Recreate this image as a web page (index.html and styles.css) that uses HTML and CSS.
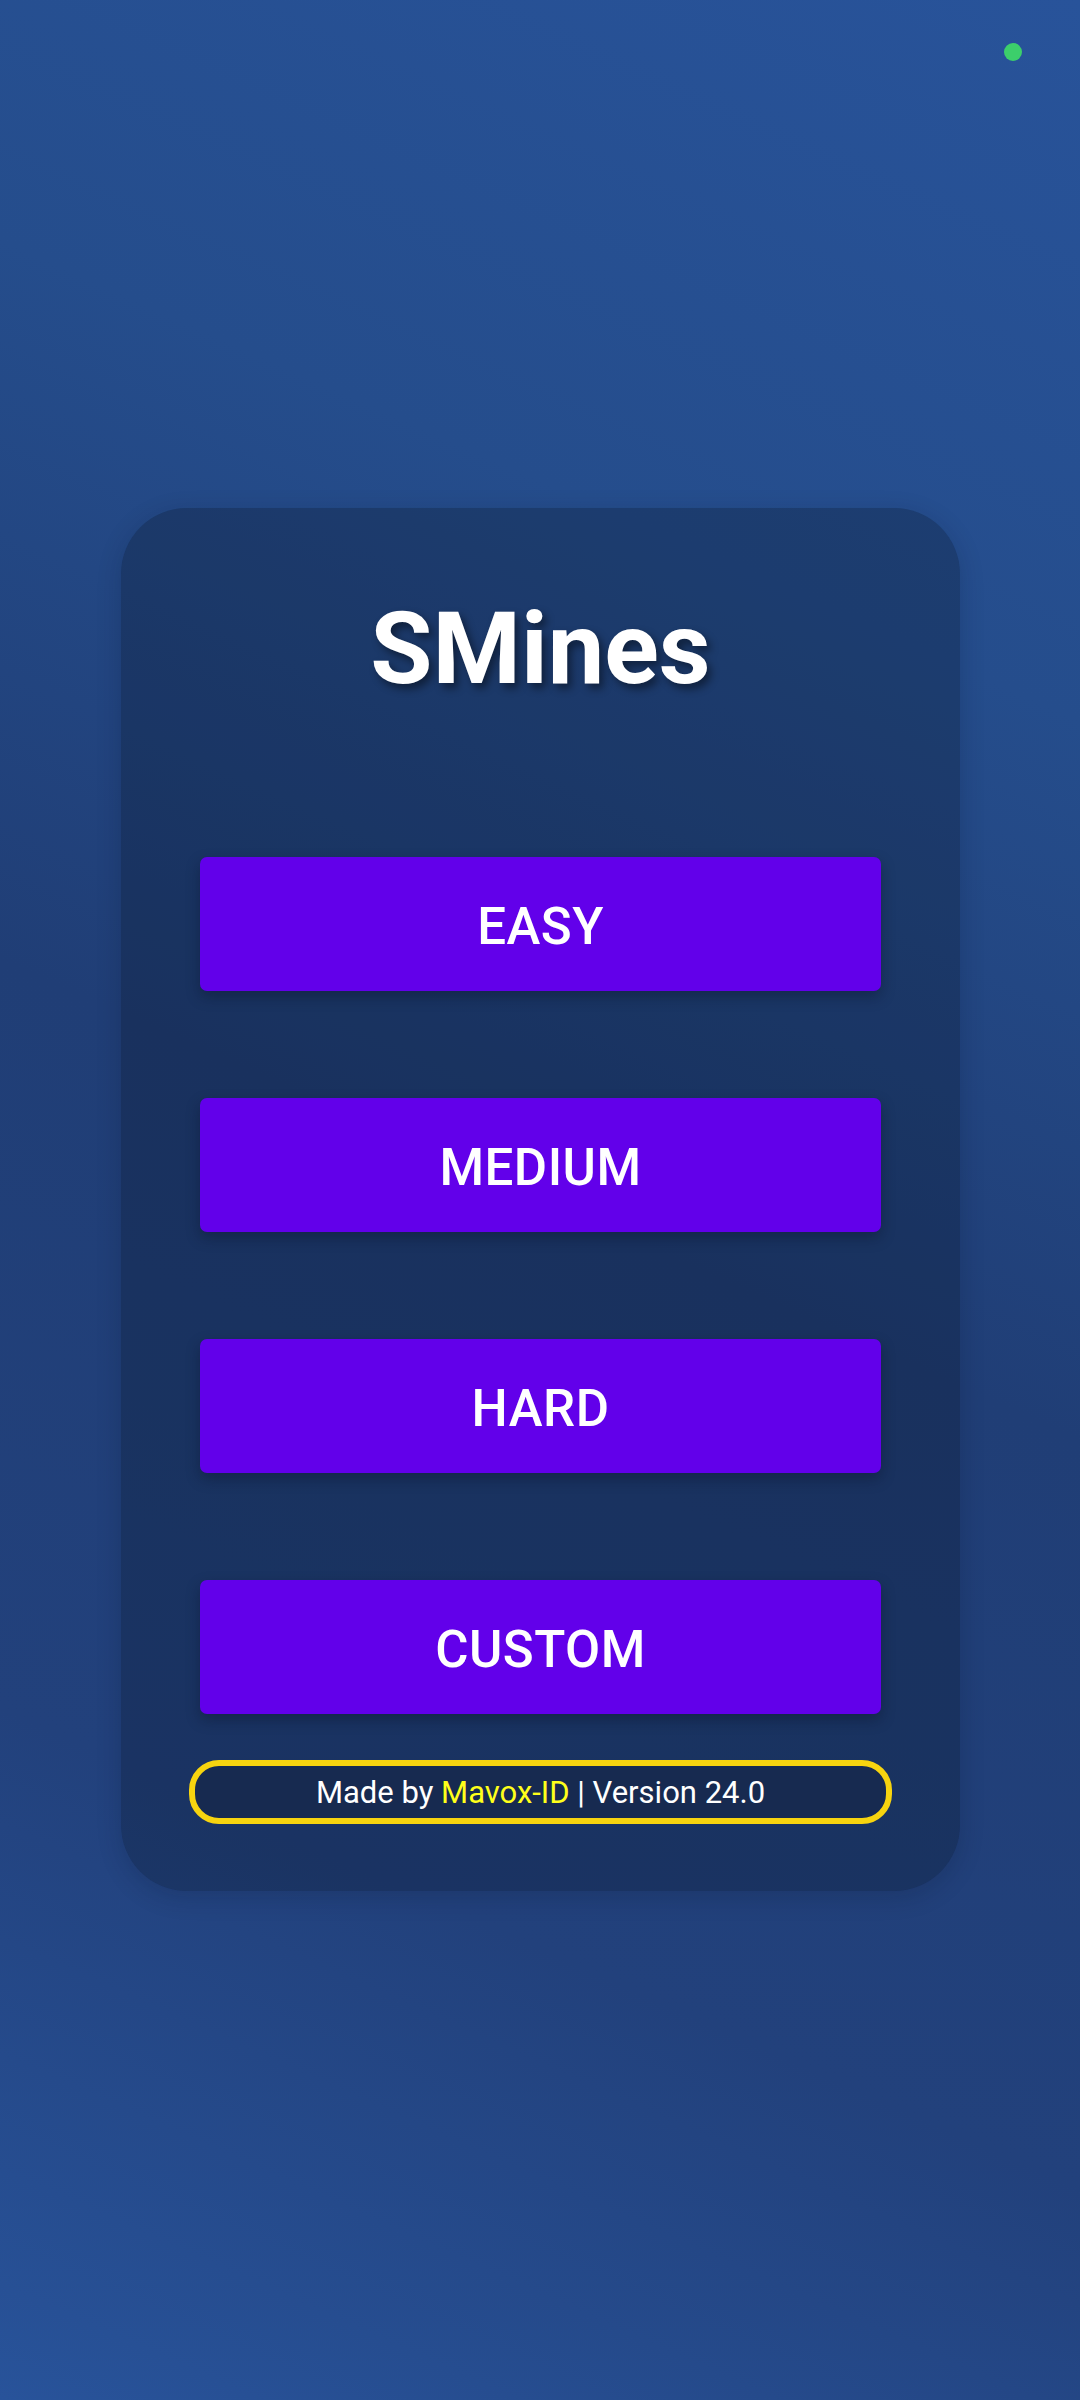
FILE: index.html
```html
<!DOCTYPE html>
<html lang="en">
<head>
<meta charset="utf-8">
<title>SMines</title>
<link rel="stylesheet" href="styles.css">
</head>
<body>
<div class="screen">
  <span class="status-dot"></span>
  <main class="card">
    <h1 class="title">SMines</h1>
    <nav class="menu">
      <button class="level-btn">EASY</button>
      <button class="level-btn">MEDIUM</button>
      <button class="level-btn">HARD</button>
      <button class="level-btn">CUSTOM</button>
    </nav>
    <footer class="credit">Made by <span class="author">Mavox-ID</span> | Version 24.0</footer>
  </main>
</div>
</body>
</html>
```

FILE: styles.css
```css
html, body {
  margin: 0;
  padding: 0;
}
body {
  width: 1080px;
  height: 2400px;
  font-family: Roboto, "Noto Sans", "Liberation Sans", sans-serif;
  background: linear-gradient(204deg, #28539a 0%, #254d8c 25%, #203e76 50%, #22417c 76%, #28539a 100%);
  overflow: hidden;
}
.screen {
  position: relative;
  width: 1080px;
  height: 2400px;
  display: flex;
  justify-content: center;
  align-items: center;
}
.status-dot {
  position: absolute;
  left: 1004px;
  top: 43px;
  width: 18px;
  height: 18px;
  border-radius: 50%;
  background: #3ccf6b;
}
.card {
  box-sizing: border-box;
  width: 839px;
  height: 1383px;
  margin-left: 1px;
  margin-top: -1px;
  border-radius: 66px;
  background: rgba(5, 10, 25, 0.25);
  box-shadow: 0 6px 24px rgba(10, 20, 45, 0.2);
  padding: 82px 68px 0 68px;
  display: flex;
  flex-direction: column;
  align-items: stretch;
}
.title {
  margin: 0;
  font-size: 101px;
  line-height: 118px;
  font-weight: 700;
  color: #ffffff;
  text-align: center;
  text-shadow: 4px 5px 8px rgba(0, 0, 0, 0.45);
}
.menu {
  margin-top: 149px;
  display: flex;
  flex-direction: column;
  gap: 107px;
  padding: 0 11px;
}
.level-btn {
  box-sizing: border-box;
  height: 134px;
  border: none;
  border-radius: 7px;
  background: #6200ea;
  color: #ffffff;
  font-family: Roboto, "Noto Sans", "Liberation Sans", sans-serif;
  font-size: 51px;
  font-weight: 500;
  letter-spacing: 0.5px;
  box-shadow: 0 6px 14px rgba(8, 14, 35, 0.35);
  display: flex;
  align-items: center;
  justify-content: center;
  padding: 5px 0 0 0;
}
.credit {
  margin-top: 46px;
  height: 64px;
  box-sizing: border-box;
  border: 6px solid #f7d40f;
  border-radius: 30px;
  background: #172a50;
  color: #ffffff;
  font-size: 31px;
  display: flex;
  align-items: center;
  justify-content: center;
  white-space: pre;
}
.author {
  color: #ffff1a;
}
```
